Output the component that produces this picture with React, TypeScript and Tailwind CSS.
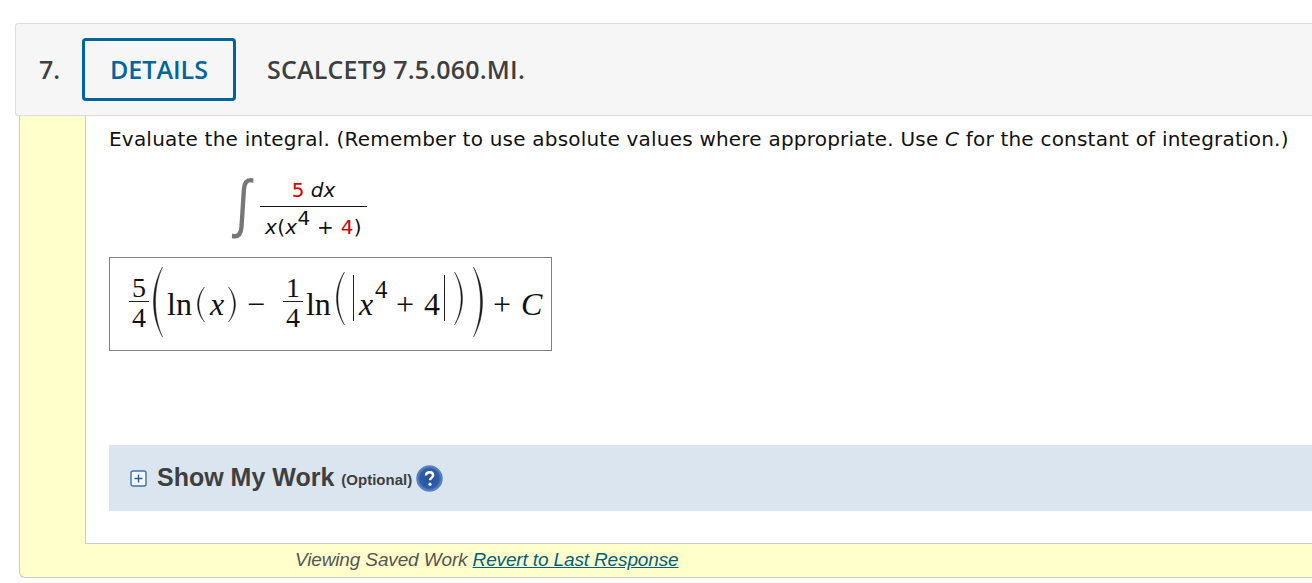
import type { ReactNode } from 'react'

// stretched math delimiter, drawn as a thin crescent
const Paren = ({ side, h, w, sw = 1.4 }: { side: 'l' | 'r'; h: number; w: number; sw?: number }) => {
  const tip = w - 0.5
  const outer = (4 * 0.5 - tip) / 3
  const inner = (4 * (0.5 + sw) - tip) / 3
  const d = `M${tip} 0 C${outer} ${h * 0.3} ${outer} ${h * 0.7} ${tip} ${h} C${inner} ${h * 0.7} ${inner} ${h * 0.3} ${tip} 0Z`
  return (
    <svg width={w} height={h} viewBox={`0 0 ${w} ${h}`} className={side === 'r' ? 'shrink-0 -scale-x-100' : 'shrink-0'}>
      <path d={d} fill="#1a1a1a" stroke="#1a1a1a" strokeWidth="0.4" />
    </svg>
  )
}

const Frac = ({ top, bottom }: { top: string; bottom: string }) => (
  <span className="flex w-[20px] shrink-0 flex-col items-center text-[28px]">
    <span className="h-[24px] w-full border-b border-[#222] text-center leading-[20px]">{top}</span>
    <span className="h-[28px] text-center leading-[32px]">{bottom}</span>
  </span>
)

const Sup = ({ children }: { children: ReactNode }) => (
  <span className="relative -top-[15px] w-[12px] text-[25px] leading-none">{children}</span>
)

export default function App() {
  return (
    <div className="h-[583px] w-[1312px] overflow-hidden bg-white pt-[23px] font-['DejaVu_Sans',sans-serif] text-[#111]">
      <div className="ml-[15px] flex h-[93px] items-center rounded-tl-[3px] rounded-bl-[3px] border border-r-0 border-[#ddd] bg-[#f6f6f6] font-['Open_Sans',sans-serif] text-[25px] font-semibold text-[#3f3f3f]">
        <span className="ml-[23px] w-[43px]">7.</span>
        <button className="flex h-[63px] w-[154px] items-center justify-center rounded-[4px] border-[3px] border-[#00659c] font-semibold text-[#00659c]">
          DETAILS
        </button>
        <span className="ml-[31px] tracking-[0.2px]">SCALCET9 7.5.060.MI.</span>
      </div>

      <div className="ml-[19px] flex h-[462px] flex-col rounded-bl-[6px] border-b border-l border-[#ccc] bg-[#ffc]">
        <div className="ml-[65px] h-[428px] border-b border-l border-[#ccc] bg-white pl-[23px]">
          <p className="pt-[9px] text-[20px] leading-[28px] tracking-[0.21px] whitespace-nowrap">
            Evaluate the integral. (Remember to use absolute values where appropriate. Use <i>C</i> for the constant of
            integration.)
          </p>

          <div className="mt-[24px] ml-[121px] flex h-[66px] items-center">
            <span className="mb-[14px] ml-[3px] w-[27px] scale-x-75 -skew-x-[5deg] text-[64px] leading-none font-extralight text-[#777]">∫</span>
            <div className="flex w-[107px] flex-col items-center text-[20px] leading-[26px]">
              <div className="h-[27px] w-full border-b border-[#111] pb-[3px] text-center leading-[20px]">
                <span className="text-[#d50000]">5</span> <i>dx</i>
              </div>
              <div className="h-[34px] pt-[7px] text-center tracking-[0.3px]">
                <i>x</i>(<i>x</i>
                <span className="relative -top-[9px] text-[20px]">4</span> + <span className="text-[#d50000]">4</span>)
              </div>
            </div>
          </div>

          <div className="mt-[14px] flex h-[94px] w-[443px] items-center border border-[#808080] pl-[19px] font-['Liberation_Serif',serif] text-[32px] text-[#111]">
            <Frac top="5" bottom="4" />
            <span className="mb-[4px] ml-[4px]"><Paren side="l" h={70} w={10} sw={2} /></span>
            <span className="ml-[4px]">ln</span>
            <span className="ml-[5px]"><Paren side="l" h={35} w={8} /></span>
            <i className="ml-[5px] w-[14px]">x</i>
            <span className="ml-[4px]"><Paren side="r" h={35} w={8} /></span>
            <span className="ml-[11px] w-[18px]">−</span>
            <span className="ml-[18px]"><Frac top="1" bottom="4" /></span>
            <span className="ml-[3px] w-[25px]">ln</span>
            <span className="mb-[12px] ml-[5px]"><Paren side="l" h={53} w={9} /></span>
            <span className="mb-[12px] ml-[8px] h-[46px] w-px bg-[#222]" />
            <i className="ml-[5px] w-[14px]">x</i>
            <span className="ml-[2px] flex"><Sup>4</Sup></span>
            <span className="ml-[9px] w-[18px]">+</span>
            <span className="ml-[10px] w-[16px]">4</span>
            <span className="mb-[12px] ml-[4px] h-[46px] w-px bg-[#222]" />
            <span className="mb-[12px] ml-[9px]"><Paren side="r" h={53} w={9} /></span>
            <span className="mb-[4px] ml-[10px]"><Paren side="r" h={70} w={10} sw={2} /></span>
            <span className="ml-[10px] w-[18px]">+</span>
            <i className="ml-[10px]">C</i>
          </div>

          <div className="mt-[94px] flex h-[66px] items-center bg-[#dae5ef] pl-[21px] font-['Liberation_Sans',sans-serif] font-bold text-[#3f3f3f]">
            <svg width="17" height="17" viewBox="0 0 17 17" className="shrink-0">
              <rect x="1" y="1" width="15" height="15" rx="2" fill="#f4f7fb" stroke="#3f73ab" strokeWidth="1.4" />
              <path d="M8.5 4.5v8M4.5 8.5h8" stroke="#2c5f96" strokeWidth="1.4" />
            </svg>
            <span className="ml-[10px] text-[25px]">Show My Work</span>
            <span className="ml-[7px] pt-[5px] text-[15px]">(Optional)</span>
            <svg width="27" height="27" viewBox="0 0 27 27" className="ml-[4px] shrink-0">
              <defs>
                <radialGradient id="help" cx="0.5" cy="0.5" r="0.55">
                  <stop offset="0" stopColor="#234f96" />
                  <stop offset="0.7" stopColor="#2f5ea8" />
                  <stop offset="1" stopColor="#7d9ed2" />
                </radialGradient>
              </defs>
              <circle cx="13.5" cy="13.5" r="12.5" fill="url(#help)" stroke="#5b83bf" strokeWidth="1.5" />
              <path d="M10 10.6c0-2.2 1.6-3.3 3.6-3.3s3.5 1.1 3.5 3c0 2.6-3.1 2.6-3.1 5" fill="none" stroke="#fff" strokeWidth="2.4" />
              <circle cx="14" cy="19.2" r="1.6" fill="#fff" />
            </svg>
          </div>
        </div>
        <div className="ml-[275px] h-[33px] pt-[1px] font-['Liberation_Sans',sans-serif] text-[19px] leading-[29px] tracking-[-0.14px] whitespace-nowrap text-[#555] italic">
          Viewing Saved Work <a className="text-[#00607f] underline">Revert to Last Response</a>
        </div>
      </div>
    </div>
  )
}
